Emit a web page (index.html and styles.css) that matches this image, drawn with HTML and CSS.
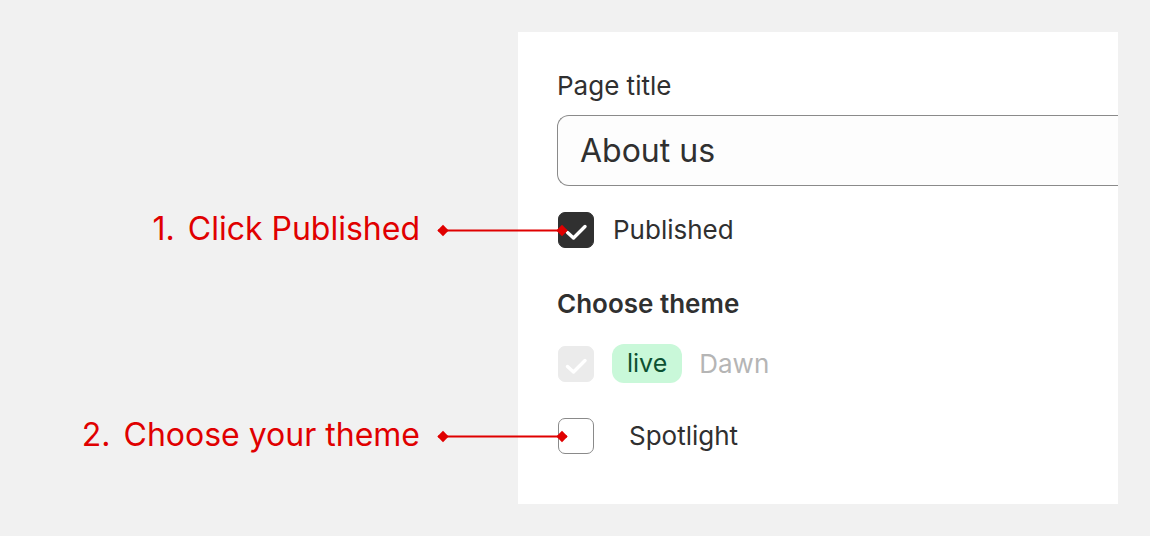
FILE: index.html
```html
<!DOCTYPE html>
<html lang="en">
<head>
  <meta charset="UTF-8" />
  <meta name="viewport" content="width=device-width, initial-scale=1.0"/>
  <title>Page settings – Walkthrough</title>
  <link rel="stylesheet" href="styles.css">
</head>
<body>

  <main class="stage">
    <section class="panel">
      <label class="field-label" for="page_title">Page title</label>
      <input class="text-input" type="text" id="page_title" value="About us" />

      <div class="check-row published-row">
        <span class="checkbox is-checked">
          <svg viewBox="0 0 36 36" width="36" height="36"><path d="M9.5 20.5 L15.5 26 L27 14.5" /></svg>
          <span class="callout">
            <span class="callout-text"><span class="step">1.</span> Click Published</span>
            <span class="connector"></span>
          </span>
        </span>
        <span class="check-label">Published</span>
      </div>

      <h2 class="section-title">Choose theme</h2>

      <div class="check-row theme-row">
        <span class="checkbox is-disabled">
          <svg viewBox="0 0 36 36" width="36" height="36"><path d="M9.5 20.5 L15.5 26 L27 14.5" /></svg>
        </span>
        <span class="badge">live</span>
        <span class="theme-name muted">Dawn</span>
      </div>

      <div class="check-row spotlight-row">
        <span class="checkbox">
          <span class="callout">
            <span class="callout-text"><span class="step">2.</span> Choose your theme</span>
            <span class="connector"></span>
          </span>
        </span>
        <span class="theme-name spotlight">Spotlight</span>
      </div>
    </section>
  </main>

</body>
</html>
```

FILE: styles.css
```css
* {
  box-sizing: border-box;
  margin: 0;
  padding: 0;
}

body {
  font-family: 'Inter', 'Noto Sans', sans-serif;
  background: #f1f1f1;
  color: #303030;
  min-height: 100vh;
}

.stage {
  padding: 32px 0 32px 518px;
}

.panel {
  width: 600px;
  background: #ffffff;
  padding: 38px 0 50px 39px;
  display: flex;
  flex-direction: column;
  align-items: flex-start;
}

.field-label {
  display: block;
  font-size: 26px;
  line-height: 32px;
  color: #303030;
}

.text-input {
  margin-top: 13px;
  width: 100%;
  height: 71px;
  padding: 0 0 0 22px;
  border: 1px solid #8a8a8a;
  border-right: none;
  border-radius: 12px 0 0 12px;
  background: #fdfdfd;
  font-family: inherit;
  font-size: 32px;
  color: #303030;
  outline: none;
}

.check-row {
  display: flex;
  align-items: center;
}

.published-row {
  margin-top: 26px;
  height: 36px;
}

.theme-row {
  margin-top: 24px;
  height: 39px;
}

.spotlight-row {
  margin-top: 35px;
  height: 36px;
}

.checkbox {
  position: relative;
  flex: none;
  width: 36px;
  height: 36px;
  margin-left: 1px;
  border-radius: 7px;
  border: 1px solid #8a8a8a;
  background: #ffffff;
}

.checkbox svg {
  display: block;
  position: absolute;
  top: -1px;
  left: -1px;
  fill: none;
  stroke: #ffffff;
  stroke-width: 3.4;
  stroke-linecap: round;
  stroke-linejoin: round;
}

.checkbox.is-checked {
  background: #303030;
  border-color: #303030;
}

.checkbox.is-disabled {
  background: #ebebeb;
  border-color: #ebebeb;
}

.check-label,
.theme-name {
  font-size: 26px;
  line-height: 32px;
}

.check-label {
  margin-left: 19px;
}

.badge {
  margin-left: 18px;
  height: 39px;
  padding: 0 15px;
  border-radius: 12px;
  background: #c9f8d9;
  color: #0c5132;
  font-size: 25px;
  line-height: 39px;
}

.muted {
  margin-left: 17px;
  color: #b5b5b5;
}

.spotlight {
  margin-left: 35px;
}

.section-title {
  margin-top: 40px;
  font-size: 26px;
  line-height: 32px;
  font-weight: 600;
  color: #303030;
}

/* walkthrough callouts sit over the page, left of the panel */
.callout {
  position: absolute;
  right: calc(100% - 8px);
  top: 50%;
  transform: translateY(-50%);
  display: flex;
  align-items: center;
  gap: 18px;
  white-space: nowrap;
  color: #e00000;
}

.callout-text {
  font-size: 32px;
  line-height: 32px;
  padding-bottom: 3px;
}

.step {
  margin-right: 4px;
}

.connector {
  position: relative;
  width: 129px;
  height: 2px;
  background: #e00000;
}

.connector::before,
.connector::after {
  content: '';
  position: absolute;
  top: -3px;
  width: 8px;
  height: 8px;
  background: #e00000;
  transform: rotate(45deg);
}

.connector::before {
  left: 1px;
}

.connector::after {
  right: 1px;
}
```
